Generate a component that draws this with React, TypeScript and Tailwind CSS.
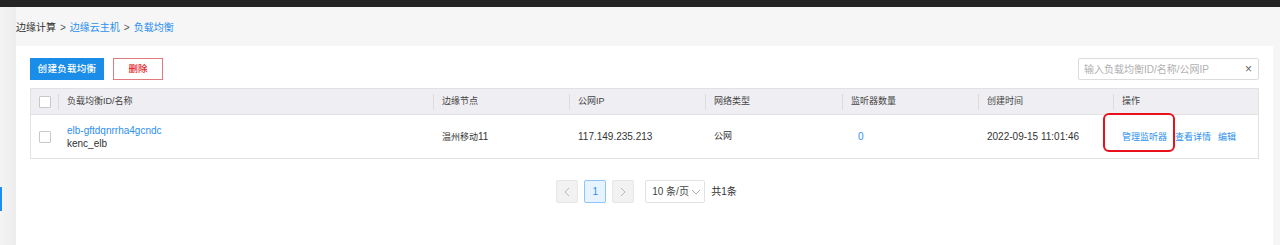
import React from 'react';

const font = { fontFamily: '"Liberation Sans", "Noto Sans CJK SC", sans-serif' };

const cols = [
  { key: 'check', w: 'w-[27px]' },
  { key: 'name', w: 'w-[375px]', label: '负载均衡ID/名称' },
  { key: 'node', w: 'w-[136px]', label: '边缘节点' },
  { key: 'ip', w: 'w-[136px]', label: '公网IP' },
  { key: 'type', w: 'w-[137px]', label: '网络类型' },
  { key: 'count', w: 'w-[136px]', label: '监听器数量' },
  { key: 'time', w: 'w-[135px]', label: '创建时间' },
  { key: 'ops', w: 'flex-1', label: '操作' },
];

function Checkbox() {
  return <span className="block w-[12px] h-[12px] border border-[#c8c8c8] bg-white rounded-[1px]" />;
}

export default function App() {
  return (
    <div className="w-[1280px] h-[245px] bg-[#f6f6f6] overflow-hidden flex flex-col text-[#333]" style={font}>
      <div className="h-[7px] bg-[#242424] shrink-0" />
      <div className="flex flex-1 min-h-0">
        {/* collapsed sidebar */}
        <div className="w-[16px] shrink-0 flex flex-col bg-gradient-to-r from-[#f4f4f4] to-[#ececec]">
          <div className="mt-[180px] w-[2px] h-[24px] bg-[#1d8ff0]" />
        </div>

        <div className="flex-1 flex flex-col min-w-0 pr-[7px]">
          <div className="h-[39px] flex items-center gap-[4px] text-[10px] pt-[2px] whitespace-nowrap">
            <span className="text-[#333]">边缘计算</span>
            <span className="text-[#555]">&gt;</span>
            <span className="text-[#2b8ff0]">边缘云主机</span>
            <span className="text-[#555]">&gt;</span>
            <span className="text-[#2b8ff0]">负载均衡</span>
          </div>

          <div className="flex-1 bg-white px-[14px] pt-[12px]">
            <div className="flex items-center justify-between">
              <div className="flex gap-[9px]">
                <button className="h-[22px] w-[74px] bg-[#1a8de8] text-white text-[9.5px] font-medium tracking-[0.3px] whitespace-nowrap">创建负载均衡</button>
                <button className="h-[22px] w-[50px] border border-[#e07a7c] text-[#e3262c] text-[9.5px] font-medium whitespace-nowrap">删除</button>
              </div>
              <div className="h-[22px] w-[181px] border border-[#dcdcdc] rounded-[2px] flex items-center justify-between pl-[5px] pr-[6px] whitespace-nowrap">
                <span className="text-[#b0b0b0] text-[10px]">输入负载均衡ID/名称/公网IP</span>
                <span className="text-[#666] text-[12px]">×</span>
              </div>
            </div>

            <div className="relative mt-[8px] border border-[#e2e2e2] whitespace-nowrap">
              <div className="flex h-[26px] bg-[#efeff3] items-center border-b border-[#e2e2e2]">
                {cols.map((c, i) => (
                  <div key={c.key} className={`${c.w} h-full flex items-center`}>
                    {i === 0 ? (
                      <div className="pl-[8px]"><Checkbox /></div>
                    ) : (
                      <div className="flex items-center h-full">
                        <span className="w-px h-[16px] bg-[#dcdcdc]" />
                        <span className="pl-[8px] text-[#444] text-[9px]">{c.label}</span>
                      </div>
                    )}
                  </div>
                ))}
              </div>
              <div className="flex h-[43px] items-center">
                <div className="w-[27px] pl-[8px]"><Checkbox /></div>
                <div className="w-[375px] pl-[9px] leading-[13px] text-[10px]">
                  <div className="text-[#2b8ff0]">elb-gftdqnrrha4gcndc</div>
                  <div className="text-[#333]">kenc_elb</div>
                </div>
                <div className="w-[136px] pl-[9px] text-[9px]">温州移动<span className="text-[10px]">11</span></div>
                <div className="w-[136px] pl-[9px] text-[10px]">117.149.235.213</div>
                <div className="w-[137px] pl-[9px] text-[9px]">公网</div>
                <div className="w-[136px] pl-[16px] text-[10px] text-[#2b8ff0]">0</div>
                <div className="w-[135px] pl-[9px] text-[10px]">2022-09-15 11:01:46</div>
                <div className="flex-1 pl-[9px] flex text-[9px] text-[#2b8ff0] pt-[2px]">
                  <span>管理监听器</span>
                  <span className="ml-[8px]">查看详情</span>
                  <span className="ml-[7px]">编辑</span>
                </div>
              </div>
              {/* highlight annotation */}
              <div className="absolute left-[1072px] top-[24px] w-[72px] h-[39px] border-2 border-[#e8101a] rounded-[6px]" />
            </div>

            <div className="flex justify-center items-center mt-[21px] gap-[6px] whitespace-nowrap pl-[4px]">
              <span className="w-[22px] h-[23px] bg-[#f2f2f2] border border-[#e6e6e6] rounded-[2px] flex items-center justify-center text-[#bbb]">
                <svg width="8" height="10" viewBox="0 0 8 10"><path d="M6 1 L2 5 L6 9" fill="none" stroke="currentColor" strokeWidth="1" /></svg>
              </span>
              <span className="w-[22px] h-[23px] bg-[#e7f4ff] border border-[#8ec5fb] rounded-[2px] flex items-center justify-center text-[#2b8ff0] text-[10px]">1</span>
              <span className="w-[22px] h-[23px] bg-[#f2f2f2] border border-[#e6e6e6] rounded-[2px] flex items-center justify-center text-[#bbb]">
                <svg width="8" height="10" viewBox="0 0 8 10"><path d="M2 1 L6 5 L2 9" fill="none" stroke="currentColor" strokeWidth="1" /></svg>
              </span>
              <span className="ml-[5px] w-[60px] h-[23px] border border-[#e2e2e2] rounded-[2px] flex items-center pl-[6px] gap-[2px] text-[10px] text-[#444]">
                10 条/页
                <svg width="10" height="8" viewBox="0 0 10 8"><path d="M1 2 L5 6 L9 2" fill="none" stroke="#aaa" strokeWidth="1" /></svg>
              </span>
              <span className="text-[#333] text-[10px]">共1条</span>
            </div>
          </div>
        </div>
      </div>
    </div>
  );
}
